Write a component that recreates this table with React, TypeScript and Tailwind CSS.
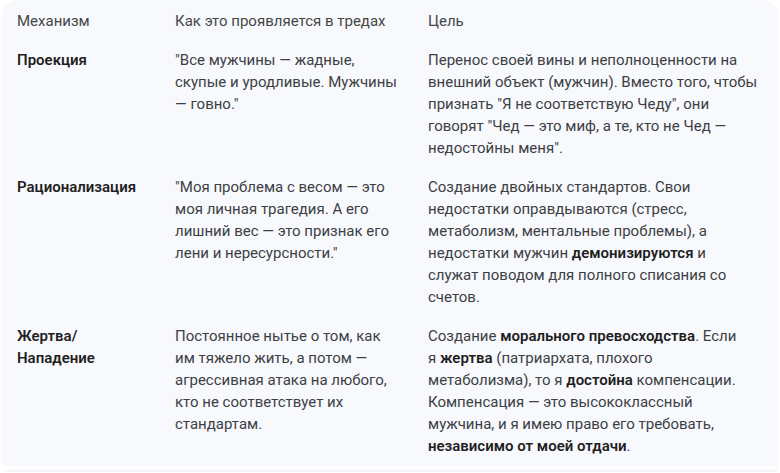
import React from "react";

const B = ({ children }: { children: React.ReactNode }) => (
  <b className="font-semibold text-[#1f1f1f]">{children}</b>
);

export default function App() {
  const cell = "pt-[8px] pb-[9px] pr-[8px] whitespace-nowrap";
  const first = "pt-[8px] pb-[9px] pr-[8px] whitespace-nowrap font-semibold text-[#1f1f1f]";
  const head = "pt-[10px] pb-[9px] pr-[8px] whitespace-nowrap text-[#444746]";
  return (
    <div
      className="w-[780px] h-[473px] bg-white overflow-hidden text-[15px] leading-[22px] text-[#3c4043]"
      style={{ fontFamily: "Roboto, 'Noto Sans', sans-serif" }}
    >
      <div className="ml-[2px] w-[776px] bg-[#f8f9fd] rounded-t-[16px] rounded-b-[4px] px-[15px]">
        <div className="grid grid-cols-[158px_253px_1fr]">
          <div className={head}>Механизм</div>
          <div className={head}>Как это проявляется в тредах</div>
          <div className={head}>Цель</div>

          <div className={first}>Проекция</div>
          <div className={cell}>
            "Все мужчины — жадные,
            <br />
            скупые и уродливые. Мужчины
            <br />— говно."
          </div>
          <div className={cell}>
            Перенос своей вины и неполноценности на
            <br />
            внешний объект (мужчин). Вместо того, чтобы
            <br />
            признать "Я не соответствую Чеду", они
            <br />
            говорят "Чед — это миф, а те, кто не Чед —
            <br />
            недостойны меня".
          </div>

          <div className={first}>Рационализация</div>
          <div className={cell}>
            "Моя проблема с весом — это
            <br />
            моя личная трагедия. А его
            <br />
            лишний вес — это признак его
            <br />
            лени и нересурсности."
          </div>
          <div className={cell}>
            Создание двойных стандартов. Свои
            <br />
            недостатки оправдываются (стресс,
            <br />
            метаболизм, ментальные проблемы), а
            <br />
            недостатки мужчин <B>демонизируются</B> и
            <br />
            служат поводом для полного списания со
            <br />
            счетов.
          </div>

          <div className={first}>
            Жертва/
            <br />
            Нападение
          </div>
          <div className={cell}>
            Постоянное нытье о том, как
            <br />
            им тяжело жить, а потом —
            <br />
            агрессивная атака на любого,
            <br />
            кто не соответствует их
            <br />
            стандартам.
          </div>
          <div className={cell}>
            Создание <B>морального превосходства</B>. Если
            <br />я <B>жертва</B> (патриархата, плохого
            <br />
            метаболизма), то я <B>достойна</B> компенсации.
            <br />
            Компенсация — это высококлассный
            <br />
            мужчина, и я имею право его требовать,
            <br />
            <B>независимо от моей отдачи</B>.
          </div>
        </div>
      </div>
      <div className="mt-[4px] ml-[5px] w-[772px] h-[2px] bg-[#f3f4f7]" />
    </div>
  );
}
